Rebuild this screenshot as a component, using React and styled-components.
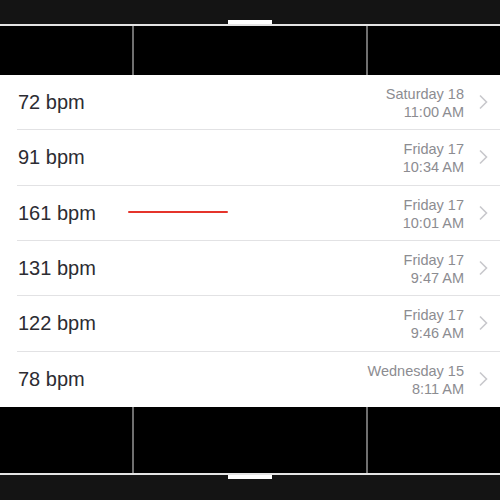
import React from "react";
import styled, { createGlobalStyle } from "styled-components";

const GlobalStyle = createGlobalStyle`
  html, body {
    margin: 0;
    padding: 0;
    background: #141414;
  }
  body {
    font-family: "Liberation Sans", Arial, sans-serif;
  }
`;

const Screen = styled.div`
  width: 500px;
  height: 500px;
  display: flex;
  flex-direction: column;
  background: #141414;
  overflow: hidden;
`;

const Edge = styled.div`
  height: ${(p) => p.h}px;
  flex-shrink: 0;
  box-sizing: border-box;
  display: flex;
  justify-content: center;
  align-items: ${(p) => (p.bottom ? "flex-start" : "flex-end")};
  background: #141414;
  ${(p) => (p.bottom ? "border-top" : "border-bottom")}: 2px solid #e4e4e4;
`;

const Tab = styled.div`
  width: 44px;
  height: 4px;
  background: #fff;
`;

const Panel = styled.div`
  height: ${(p) => p.h}px;
  flex-shrink: 0;
  display: grid;
  grid-template-columns: 132px 1fr 132px;
  background: #000;
`;

const Cell = styled.div`
  border-left: ${(p) => (p.divided ? "2px solid #6f6f6f" : "none")};
  border-right: ${(p) => (p.divided ? "2px solid #6f6f6f" : "none")};
`;

const List = styled.div`
  height: 332px;
  flex-shrink: 0;
  background: #fff;
  display: flex;
  flex-direction: column;
`;

const Row = styled.div`
  position: relative;
  flex: 1;
  display: flex;
  padding-left: 17px;
`;

const RowInner = styled.div`
  flex: 1;
  display: flex;
  align-items: center;
  border-bottom: ${(p) => (p.last ? "none" : "1.5px solid #e2e2e4")};
`;

const Bpm = styled.div`
  flex: 1;
  padding-left: 1px;
  margin-top: 1px;
  font-size: 20px;
  color: #2c2c32;
`;

const When = styled.div`
  text-align: right;
  font-size: 14.5px;
  line-height: 18px;
  color: #8c8c91;
  margin-right: 14px;
  margin-top: 2px;
`;

const Chevron = styled.svg`
  width: 10px;
  height: 16px;
  margin-right: 12px;
`;

const Mark = styled.div`
  position: absolute;
  left: 128px;
  top: 25px;
  width: 100px;
  height: 2px;
  border-radius: 1px;
  background: #e5342b;
`;

const rows = [
  { bpm: "72 bpm", day: "Saturday 18", time: "11:00 AM" },
  { bpm: "91 bpm", day: "Friday 17", time: "10:34 AM" },
  { bpm: "161 bpm", day: "Friday 17", time: "10:01 AM", mark: true },
  { bpm: "131 bpm", day: "Friday 17", time: "9:47 AM" },
  { bpm: "122 bpm", day: "Friday 17", time: "9:46 AM" },
  { bpm: "78 bpm", day: "Wednesday 15", time: "8:11 AM" },
];

function Columns({ h }) {
  return (
    <Panel h={h}>
      <Cell />
      <Cell divided />
      <Cell />
    </Panel>
  );
}

export default function App() {
  return (
    <Screen>
      <GlobalStyle />
      <Edge h={26}>
        <Tab />
      </Edge>
      <Columns h={49} />
      <List>
        {rows.map((r, i) => (
          <Row key={i}>
            <RowInner last={i === rows.length - 1}>
              <Bpm>{r.bpm}</Bpm>
              <When>
                {r.day}
                <br />
                {r.time}
              </When>
              <Chevron viewBox="0 0 10 16">
                <polyline
                  points="2,1.5 8.5,8 2,14.5"
                  fill="none"
                  stroke="#c8c8cc"
                  strokeWidth="1.6"
                />
              </Chevron>
            </RowInner>
            {r.mark && <Mark />}
          </Row>
        ))}
      </List>
      <Columns h={66} />
      <Edge h={27} bottom>
        <Tab />
      </Edge>
    </Screen>
  );
}
